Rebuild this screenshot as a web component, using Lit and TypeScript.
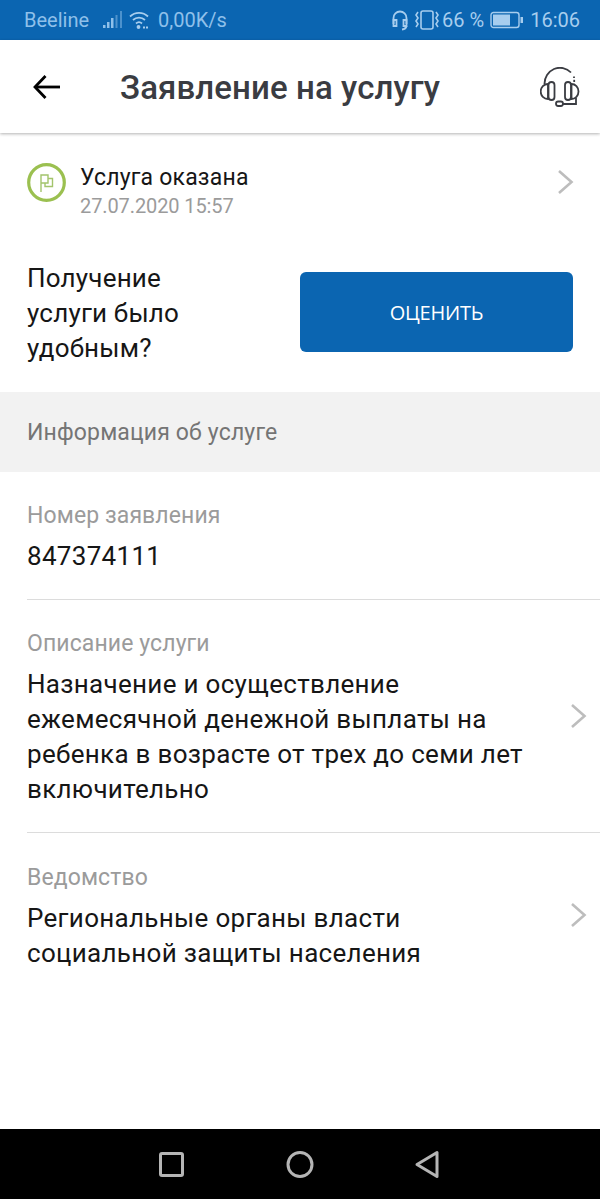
import { LitElement, html, css, svg } from 'lit';
import { customElement } from 'lit/decorators.js';

const chevron = () => html`
  <svg class="chevron" width="17" height="26" viewBox="0 0 17 26" fill="none">
    <path d="M2 2 L14.5 13 L2 24" stroke="#bdbdbd" stroke-width="2.6" />
  </svg>
`;

const headset = svg`
  <g stroke="#3a3c42" stroke-width="1.8" fill="none">
    <path d="M4.5 17 A15.5 16 0 0 1 31 5.5" />
    <path d="M34 9.5 V11" />
    <path d="M34.2 12.8 V15" />
    <path d="M8 17 A7.3 7.5 0 0 0 8 32 Z" />
    <rect x="8.5" y="15" width="6" height="18" rx="3" />
    <rect x="25" y="15" width="6" height="18" rx="3" />
    <path d="M31.5 17 A7 7.5 0 0 1 31.5 32 Z" />
    <path d="M36 31 V37 H23" />
    <rect x="16" y="34.5" width="7" height="4.5" rx="2.2" />
  </g>
`;

@customElement('app-root')
export class AppRoot extends LitElement {
  static styles = css`
    :host {
      display: flex;
      flex-direction: column;
      width: 600px;
      height: 1199px;
      overflow: hidden;
      background: #fff;
      font-family: Roboto, 'Liberation Sans', sans-serif;
      color: #161616;
    }
    .status {
      height: 40px;
      background: #0b65b1;
      color: #8fc0ea;
      font-size: 20px;
      display: flex;
      align-items: center;
      padding: 0 20px 0 24px;
      flex: none;
    }
    .status .carrier {
      margin-right: 13px;
    }
    .status .speed {
      margin-left: 9px;
    }
    .status .right {
      margin-left: auto;
      display: flex;
      align-items: center;
      color: #a7cdee;
    }
    .status .pct {
      margin: 0 6px 0 1px;
    }
    .status .time {
      margin-left: 6px;
    }
    .status svg {
      display: block;
    }
    .appbar {
      height: 93px;
      flex: none;
      display: flex;
      align-items: center;
      padding: 0 20px 0 32px;
      box-shadow: 0 1px 3px rgba(0, 0, 0, 0.3);
      position: relative;
      box-sizing: border-box;
    }
    .appbar h1 {
      margin: 2px 0 0 60px;
      font-size: 33px;
      font-weight: 500;
      color: #3a3c42;
      flex: 1;
      letter-spacing: 0.1px;
    }
    .appbar svg {
      display: block;
      flex: none;
    }
    .state {
      display: flex;
      align-items: flex-start;
      padding: 30px 26px 0 27px;
    }
    .state .ring {
      width: 39px;
      height: 39px;
      margin-right: 14px;
      flex: none;
      display: block;
    }
    .state .chevron {
      margin-top: 6px;
    }
    .state .texts {
      flex: 1;
    }
    .state .title {
      font-size: 23px;
      line-height: 28px;
      margin-top: 1px;
      letter-spacing: 0.2px;
    }
    .state .date {
      font-size: 20px;
      line-height: 28px;
      color: #9b9b9b;
      letter-spacing: -0.1px;
    }
    .rate {
      display: flex;
      align-items: center;
      justify-content: space-between;
      padding: 41px 27px 26px;
    }
    .rate p {
      margin: 0;
      font-size: 26px;
      line-height: 35px;
      letter-spacing: 0.2px;
    }
    .rate button {
      width: 273px;
      height: 80px;
      margin-bottom: 3px;
      border: none;
      border-radius: 6px;
      background: #0b65b1;
      color: #fff;
      font-family: 'Open Sans', sans-serif;
      font-size: 20px;
      letter-spacing: -0.2px;
      padding: 0;
    }
    .section {
      height: 80px;
      flex: none;
      background: #f2f2f2;
      display: flex;
      align-items: center;
      padding: 0 27px;
      font-size: 23px;
      color: #757575;
      letter-spacing: 0.15px;
    }
    .row {
      margin-left: 27px;
      padding: 30px 13px 25px 0;
      border-bottom: 1px solid #dcdcdc;
      display: flex;
      align-items: center;
    }
    .row.last {
      padding-top: 31px;
      border-bottom: none;
    }
    .row .body {
      flex: 1;
    }
    .row .chevron {
      margin-bottom: 5px;
    }
    .row .label {
      font-size: 23px;
      line-height: 28px;
      color: #9b9b9b;
      margin-bottom: 9px;
      letter-spacing: 0.1px;
    }
    .row .value {
      font-size: 26px;
      line-height: 35px;
      letter-spacing: 0.3px;
    }
    .spacer {
      flex: 1;
    }
    .nav {
      height: 70px;
      flex: none;
      background: #000;
      display: flex;
      align-items: center;
      justify-content: center;
    }
    .chevron {
      flex: none;
      display: block;
    }
  `;

  render() {
    return html`
      <div class="status">
        <span class="carrier">Beeline</span>
        <svg width="21" height="20" viewBox="0 0 21 20" fill="#8fc0ea">
          <rect x="1" y="15" width="2.5" height="3" />
          <rect x="5" y="12" width="2.5" height="6" />
          <rect x="9" y="8" width="2.5" height="10" />
          <rect x="13.5" y="5" width="2" height="13" opacity="0.5" />
          <rect x="18" y="1" width="2" height="17" opacity="0.5" />
        </svg>
        <svg width="20" height="20" viewBox="0 0 20 20" fill="none" stroke="#a7cdee" stroke-width="1.8" style="margin-left:6px">
          <path d="M1 6.5 A13 13 0 0 1 19 6.5" />
          <path d="M4 10 A9 9 0 0 1 16 10" />
          <path d="M7 13.5 A4.5 4.5 0 0 1 13 13.5" />
          <circle cx="9.5" cy="17" r="1" fill="#a7cdee" />
          <path d="M14 17.5 H19" stroke-dasharray="2 1" />
        </svg>
        <span class="speed">0,00K/s</span>
        <div class="right">
          <svg width="16" height="22" viewBox="0 0 16 22" fill="none" stroke="#a7cdee" stroke-width="1.8">
            <path d="M1.5 15 V9 A6.5 6.5 0 0 1 14.5 9 V15" />
            <path d="M1.5 11 H4.5 V17 H1.5 Z" />
            <path d="M11.5 11 H14.5 V17 H11.5 Z" />
            <path d="M14.5 17 Q14 20 10 20.5" />
          </svg>
          <svg width="27" height="22" viewBox="0 0 27 22" fill="none" stroke="#a7cdee" stroke-width="1.6" style="margin-left:6px">
            <rect x="7" y="2" width="12" height="18" rx="2" />
            <path d="M4 3 L2 6 L4 9 L2 12 L4 15 L2 18" />
            <path d="M22 3 L24 6 L22 9 L24 12 L22 15 L24 18" />
          </svg>
          <span class="pct">66 %</span>
          <svg width="34" height="18" viewBox="0 0 34 18">
            <rect x="1" y="1.5" width="28" height="15" rx="2.5" fill="none" stroke="#a7cdee" stroke-width="1.4" />
            <rect x="3" y="3.5" width="17" height="11" fill="#a7cdee" />
            <rect x="30.5" y="6" width="2.5" height="6" fill="#a7cdee" />
          </svg>
          <span class="time">16:06</span>
        </div>
      </div>

      <div class="appbar">
        <svg width="28" height="26" viewBox="0 0 28 26" fill="none" stroke="#000" stroke-width="2.8">
          <path d="M28 13 H3" />
          <path d="M13.5 2 L3 13 L13.5 24" />
        </svg>
        <h1>Заявление на услугу</h1>
        <svg width="40" height="40" viewBox="0 0 40 40">${headset}</svg>
      </div>

      <div class="state">
        <svg class="ring" viewBox="0 0 39 39" fill="none">
          <circle cx="19.5" cy="19.5" r="17.8" stroke="#9bc050" stroke-width="3.2" />
          <path d="M14 29 V12 H21 V20 H14 M21 15.5 H25.5 V23.5 H18 V20" stroke="#a3c46c" stroke-width="1.4" />
        </svg>
        <div class="texts">
          <div class="title">Услуга оказана</div>
          <div class="date">27.07.2020 15:57</div>
        </div>
        ${chevron()}
      </div>

      <div class="rate">
        <p>Получение<br />услуги было<br />удобным?</p>
        <button>ОЦЕНИТЬ</button>
      </div>

      <div class="section">Информация об услуге</div>

      <div class="row">
        <div class="body">
          <div class="label">Номер заявления</div>
          <div class="value">847374111</div>
        </div>
      </div>
      <div class="row">
        <div class="body">
          <div class="label">Описание услуги</div>
          <div class="value">Назначение и осуществление<br />ежемесячной денежной выплаты на<br />ребенка в возрасте от трех до семи лет<br />включительно</div>
        </div>
        ${chevron()}
      </div>
      <div class="row last">
        <div class="body">
          <div class="label">Ведомство</div>
          <div class="value">Региональные органы власти<br />социальной защиты населения</div>
        </div>
        ${chevron()}
      </div>

      <div class="spacer"></div>
      <div class="nav">
        <svg width="282" height="36" viewBox="0 0 282 36" fill="none" stroke="#b5b5b5" stroke-width="3" stroke-linejoin="round">
          <rect x="1.5" y="7.5" width="22" height="22" rx="1.5" />
          <circle cx="141" cy="18.5" r="12" />
          <path d="M258 18.5 L278 6.5 V30.5 Z" />
        </svg>
      </div>
    `;
  }
}
